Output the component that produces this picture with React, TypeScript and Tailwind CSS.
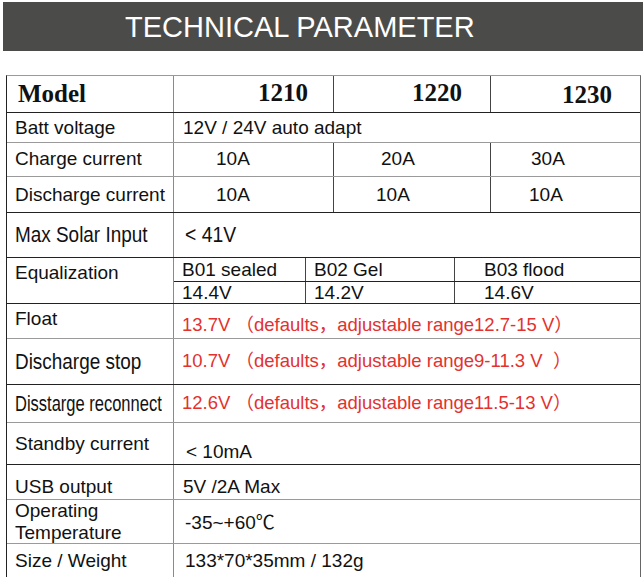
const sans = "font-['Liberation_Sans',Arial,'Noto_Sans_CJK_SC',sans-serif]";
const serif = "font-['Liberation_Serif','Times_New_Roman',serif]";

function Row({
  label,
  children,
  className,
  labelClass,
}: {
  label: React.ReactNode;
  children: React.ReactNode;
  className: string;
  labelClass?: string;
}) {
  return (
    <div className={`flex border-b ${className}`}>
      <div className={`w-[167px] shrink-0 border-r border-[#8a8a8a] pl-[8px] ${labelClass ?? "flex items-center"}`}>
        {label}
      </div>
      <div className="flex min-w-0 flex-1">{children}</div>
    </div>
  );
}

function Red({ children }: { children: React.ReactNode }) {
  return <span className="whitespace-nowrap text-[18.5px] text-[#e3312f]">{children}</span>;
}

export default function App() {
  return (
    <div className={`h-[577px] w-[643px] overflow-hidden bg-white text-[#111] ${sans}`}>
      <div className="ml-[3px] mt-[2px] flex h-[49px] items-center bg-[#4b4c49] pl-[122px] pt-[2px] text-[29px] leading-none text-white">
        TECHNICAL PARAMETER
      </div>

      <div className="ml-[6px] mt-[24px] w-[635px] border-l border-r border-t border-l-[#222] border-r-[#666] border-t-[#9a9a9a] text-[19px] leading-none">
        <Row
          className="h-[37px] border-[#222]"
          labelClass={`flex items-end pb-[6px] pl-[11px] text-[25px] font-bold ${serif}`}
          label="Model"
        >
          <div className={`flex w-[160px] items-end justify-end border-r border-[#444] pb-[7px] pr-[25px] text-[25px] font-bold ${serif}`}>1210</div>
          <div className={`flex w-[157px] items-end justify-end border-r border-[#444] pb-[7px] pr-[28px] text-[25px] font-bold ${serif}`}>1220</div>
          <div className={`flex flex-1 items-end justify-end pb-[5px] pr-[28px] text-[25px] font-bold ${serif}`}>1230</div>
        </Row>

        <Row className="h-[30px] border-[#9a9a9a]" label="Batt voltage">
          <div className="flex items-center pl-[9px]">12V / 24V auto adapt</div>
        </Row>

        <Row className="h-[34px] border-[#9a9a9a]" labelClass="pt-[6px]" label="Charge current">
          <div className="w-[160px] border-r border-[#444] pl-[42px] pt-[6px]">10A</div>
          <div className="w-[157px] border-r border-[#444] pl-[47px] pt-[6px]">20A</div>
          <div className="flex-1 pl-[40px] pt-[6px]">30A</div>
        </Row>

        <Row className="h-[36px] border-[#222]" label="Discharge current">
          <div className="flex w-[160px] items-center border-r border-[#444] pl-[42px]">10A</div>
          <div className="flex w-[157px] items-center border-r border-[#444] pl-[42px]">10A</div>
          <div className="flex flex-1 items-center pl-[38px]">10A</div>
        </Row>

        <Row
          className="h-[45px] border-[#222]"
          labelClass="flex items-center text-[22px]"
          label={<span className="inline-block origin-left scale-x-[0.86] whitespace-nowrap">Max Solar Input</span>}
        >
          <div className="flex items-center pl-[11px] text-[22px]">
            <span className="inline-block origin-left scale-x-[0.88] whitespace-nowrap">&lt; 41V</span>
          </div>
        </Row>

        <Row className="h-[46px] border-[#222]" labelClass="pt-[5px]" label="Equalization">
          <div className="flex flex-1 flex-col">
            <div className="flex h-[24px] border-b border-[#222]">
              <div className="flex w-[132px] items-center border-r border-[#444] pl-[8px]">B01 sealed</div>
              <div className="flex w-[149px] items-center border-r border-[#444] pl-[8px]">B02 Gel</div>
              <div className="flex flex-1 items-center pl-[29px]">B03 flood</div>
            </div>
            <div className="flex flex-1">
              <div className="flex w-[132px] items-center border-r border-[#444] pl-[8px]">14.4V</div>
              <div className="flex w-[149px] items-center border-r border-[#444] pl-[8px]">14.2V</div>
              <div className="flex flex-1 items-center pl-[29px]">14.6V</div>
            </div>
          </div>
        </Row>

        <Row className="h-[35px] border-[#9a9a9a]" labelClass="pt-[5px]" label="Float">
          <div className="pl-[8px] pt-[11px]">
            <Red>13.7V （defaults，adjustable range12.7-15 V）</Red>
          </div>
        </Row>

        <Row
          className="h-[46px] border-[#222]"
          labelClass="flex items-center text-[22px]"
          label={<span className="inline-block origin-left scale-x-[0.86] whitespace-nowrap">Discharge stop</span>}
        >
          <div className="flex items-center pl-[8px]">
            <Red>10.7V （defaults，adjustable range9-11.3 V&nbsp;&nbsp;）</Red>
          </div>
        </Row>

        <Row
          className="h-[38px] border-[#9a9a9a]"
          labelClass="flex items-center text-[22px]"
          label={<span className="inline-block origin-left scale-x-[0.75] whitespace-nowrap">Disstarge reconnect</span>}
        >
          <div className="flex items-center pl-[8px]">
            <Red>12.6V （defaults，adjustable range11.5-13 V）</Red>
          </div>
        </Row>

        <Row className="h-[42px] border-[#222]" labelClass="pt-[11px]" label="Standby current">
          <div className="pl-[12px] pt-[19px]">&lt; 10mA</div>
        </Row>

        <Row className="h-[35px] border-[#9a9a9a]" labelClass="flex items-end pb-[3px]" label="USB output">
          <div className="flex items-end pb-[3px] pl-[9px]">5V /2A Max</div>
        </Row>

        <Row
          className="h-[44px] border-[#9a9a9a]"
          labelClass="flex flex-col justify-center gap-[3px]"
          label={
            <>
              <span>Operating</span>
              <span>Temperature</span>
            </>
          }
        >
          <div className="flex items-center pl-[11px] pt-[2px]">-35~+60℃</div>
        </Row>

        <Row className="h-[40px] border-transparent" labelClass="pt-[7px]" label="Size / Weight">
          <div className="pl-[11px] pt-[7px]">133*70*35mm / 132g</div>
        </Row>
      </div>
    </div>
  );
}
